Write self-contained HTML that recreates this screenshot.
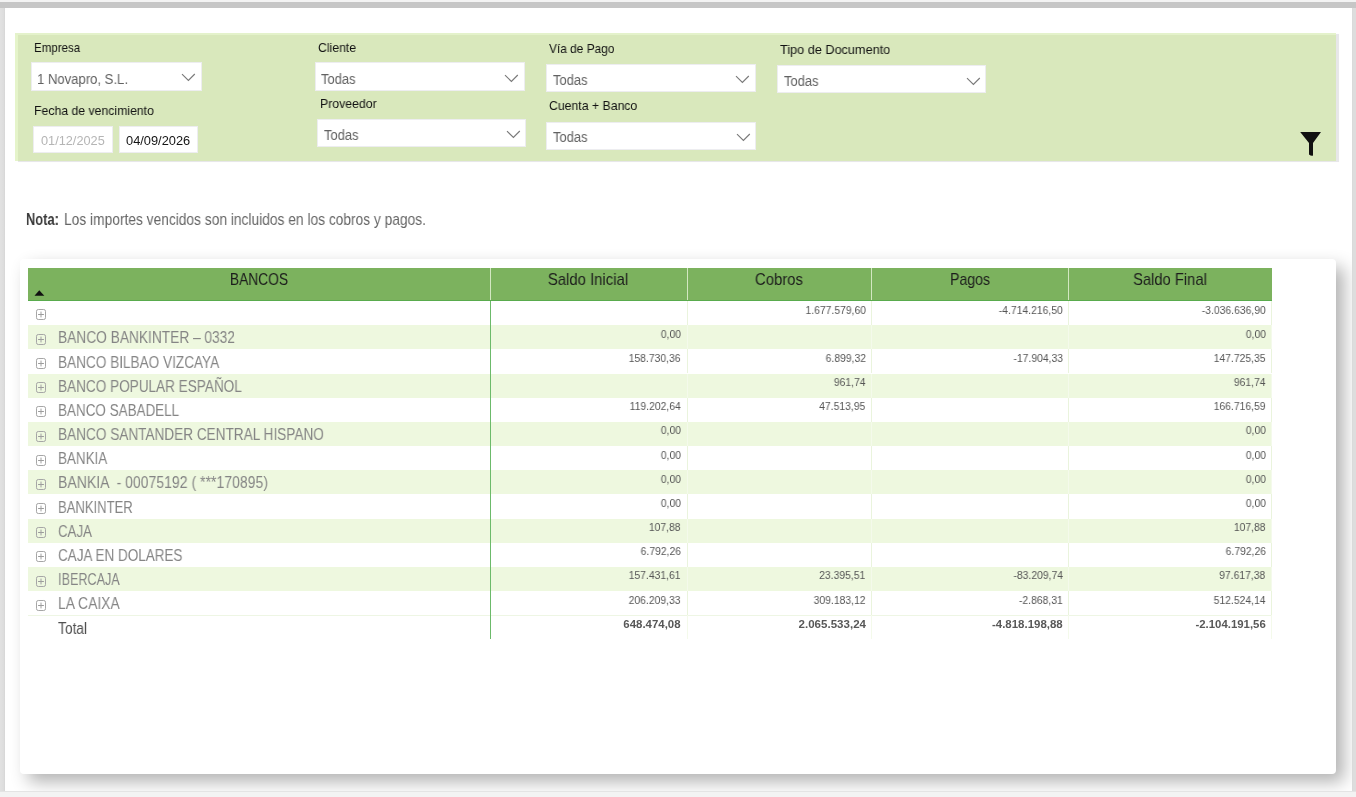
<!DOCTYPE html>
<html><head><meta charset="utf-8"><style>
html,body{margin:0;padding:0;}
body{width:1356px;height:797px;position:relative;overflow:hidden;background:#f3f3f3;font-family:"Liberation Sans",sans-serif;}
.t{position:absolute;white-space:nowrap;line-height:1;will-change:transform;}
.b{position:absolute;}
</style></head><body>
<div class="b" style="left:5px;top:8px;width:1347px;height:783px;background:#ffffff"></div>
<div class="b" style="left:15px;top:33px;width:1321px;height:128px;background:#d9e8bc;box-shadow:3px 1px 0.6px #e7e7e9"></div>
<div class="b" style="left:15px;top:33px;width:3px;height:128px;background:#e5f4ca"></div>
<div class="b" style="left:15px;top:33px;width:1321px;height:1.5px;background:#e4f2cb"></div>
<div class="t" style="left:33.90px;transform-origin:0 0;top:40.50px;font-size:13px;color:#121212;font-weight:normal;transform:scaleX(0.8880);">Empresa</div>
<div class="t" style="left:317.70px;transform-origin:0 0;top:40.50px;font-size:13px;color:#121212;font-weight:normal;transform:scaleX(0.9415);">Cliente</div>
<div class="t" style="left:549.00px;transform-origin:0 0;top:41.50px;font-size:13px;color:#121212;font-weight:normal;transform:scaleX(0.9154);">Vía de Pago</div>
<div class="t" style="left:780.40px;transform-origin:0 0;top:42.50px;font-size:13px;color:#121212;font-weight:normal;transform:scaleX(0.9755);">Tipo de Documento</div>
<div class="t" style="left:34.30px;transform-origin:0 0;top:103.50px;font-size:13px;color:#121212;font-weight:normal;transform:scaleX(0.9428);">Fecha de vencimiento</div>
<div class="t" style="left:320.40px;transform-origin:0 0;top:96.50px;font-size:13px;color:#121212;font-weight:normal;transform:scaleX(0.9436);">Proveedor</div>
<div class="t" style="left:549.10px;transform-origin:0 0;top:98.50px;font-size:13px;color:#121212;font-weight:normal;transform:scaleX(0.9434);">Cuenta + Banco</div>
<div class="b" style="left:31px;top:62px;width:171px;height:29px;background:#fff;box-shadow:inset 0 0 0 1px #ededf0"></div>
<div class="t" style="left:37.20px;transform-origin:0 0;top:71.65px;font-size:14px;color:#626262;font-weight:normal;transform:scaleX(0.9355);">1 Novapro, S.L.</div>
<svg class="b" style="left:180.30px;top:72.10px" width="18" height="12" viewBox="0 0 18 12"><path d="M2.00 2.20 L8.40 8.40 L14.80 2.00" fill="none" stroke="#7a7a7a" stroke-width="1.15"/></svg>
<div class="b" style="left:314.5px;top:62.4px;width:210.5px;height:28.35px;background:#fff;box-shadow:inset 0 0 0 1px #ededf0"></div>
<div class="t" style="left:321.20px;transform-origin:0 0;top:71.65px;font-size:14px;color:#626262;font-weight:normal;transform:scaleX(0.9263);">Todas</div>
<svg class="b" style="left:503.30px;top:72.50px" width="18" height="12" viewBox="0 0 18 12"><path d="M2.00 2.20 L8.40 8.40 L14.80 2.00" fill="none" stroke="#7a7a7a" stroke-width="1.15"/></svg>
<div class="b" style="left:546.3px;top:63.7px;width:209.4px;height:28.8px;background:#fff;box-shadow:inset 0 0 0 1px #ededf0"></div>
<div class="t" style="left:552.50px;transform-origin:0 0;top:72.65px;font-size:14px;color:#626262;font-weight:normal;transform:scaleX(0.9263);">Todas</div>
<svg class="b" style="left:734.00px;top:73.80px" width="18" height="12" viewBox="0 0 18 12"><path d="M2.00 2.20 L8.40 8.40 L14.80 2.00" fill="none" stroke="#7a7a7a" stroke-width="1.15"/></svg>
<div class="b" style="left:777.2px;top:65.4px;width:209.3px;height:28.0px;background:#fff;box-shadow:inset 0 0 0 1px #ededf0"></div>
<div class="t" style="left:783.50px;transform-origin:0 0;top:73.65px;font-size:14px;color:#626262;font-weight:normal;transform:scaleX(0.9263);">Todas</div>
<svg class="b" style="left:964.80px;top:75.50px" width="18" height="12" viewBox="0 0 18 12"><path d="M2.00 2.20 L8.40 8.40 L14.80 2.00" fill="none" stroke="#7a7a7a" stroke-width="1.15"/></svg>
<div class="b" style="left:317.2px;top:118.7px;width:209.3px;height:28.8px;background:#fff;box-shadow:inset 0 0 0 1px #ededf0"></div>
<div class="t" style="left:323.50px;transform-origin:0 0;top:127.65px;font-size:14px;color:#626262;font-weight:normal;transform:scaleX(0.9263);">Todas</div>
<svg class="b" style="left:504.80px;top:128.80px" width="18" height="12" viewBox="0 0 18 12"><path d="M2.00 2.20 L8.40 8.40 L14.80 2.00" fill="none" stroke="#7a7a7a" stroke-width="1.15"/></svg>
<div class="b" style="left:546.3px;top:121.5px;width:210.2px;height:28.3px;background:#fff;box-shadow:inset 0 0 0 1px #ededf0"></div>
<div class="t" style="left:552.50px;transform-origin:0 0;top:129.65px;font-size:14px;color:#626262;font-weight:normal;transform:scaleX(0.9263);">Todas</div>
<svg class="b" style="left:734.80px;top:131.60px" width="18" height="12" viewBox="0 0 18 12"><path d="M2.00 2.20 L8.40 8.40 L14.80 2.00" fill="none" stroke="#7a7a7a" stroke-width="1.15"/></svg>
<div class="b" style="left:33.3px;top:126.3px;width:79.3px;height:26.5px;background:#fff;box-shadow:inset 0 0 0 1px #ededf0"></div>
<div class="b" style="left:119.1px;top:126.3px;width:78.6px;height:26.5px;background:#fff;box-shadow:inset 0 0 0 1px #ededf0"></div>
<div class="t" style="left:41.00px;transform-origin:0 0;top:134.75px;font-size:12.7px;color:#b5b5b5;font-weight:normal;transform:scaleX(1.0037);">01/12/2025</div>
<div class="t" style="left:126.20px;transform-origin:0 0;top:134.75px;font-size:12.7px;color:#151515;font-weight:normal;transform:scaleX(1.0116);">04/09/2026</div>
<svg class="b" style="left:1299px;top:131px" width="24" height="27" viewBox="0 0 24 27"><path d="M1.2 1 L22 1 L14 12 L14 24.5 Q12.5 25.5 10 23.5 L10 12 Z" fill="#111"/></svg>
<div class="t" style="left:25.90px;transform-origin:0 0;top:212.17px;font-size:15.75px;color:#3a3a3a;font-weight:bold;transform:scaleX(0.8176);">Nota:</div>
<div class="t" style="left:63.70px;transform-origin:0 0;top:212.17px;font-size:15.75px;color:#666;font-weight:normal;transform:scaleX(0.8742);">Los importes vencidos son incluidos en los cobros y pagos.</div>
<div class="b" style="left:20px;top:259px;width:1316px;height:515px;background:#fff;border-radius:4px;box-shadow:8px 8px 17px rgba(0,0,0,0.3)"></div>
<div class="b" style="left:28px;top:267.5px;width:1244px;height:33.5px;background:#7cb25e"></div>
<div class="b" style="left:28px;top:300px;width:1244px;height:1px;background:#59ab4d"></div>
<div class="b" style="left:490px;top:267.5px;width:1px;height:32.5px;background:#d3e7c1"></div>
<div class="b" style="left:687px;top:267.5px;width:1px;height:32.5px;background:#d3e7c1"></div>
<div class="b" style="left:871px;top:267.5px;width:1px;height:32.5px;background:#d3e7c1"></div>
<div class="b" style="left:1068px;top:267.5px;width:1px;height:32.5px;background:#d3e7c1"></div>
<div class="t" style="left:-741.00px;width:2000px;text-align:center;transform-origin:50% 0;top:272.17px;font-size:15.75px;color:#1c1c1c;font-weight:normal;transform:scaleX(0.8750);">BANCOS</div>
<div class="t" style="left:-412.40px;width:2000px;text-align:center;transform-origin:50% 0;top:272.17px;font-size:15.75px;color:#1c1c1c;font-weight:normal;transform:scaleX(0.9444);">Saldo Inicial</div>
<div class="t" style="left:-220.60px;width:2000px;text-align:center;transform-origin:50% 0;top:272.17px;font-size:15.75px;color:#1c1c1c;font-weight:normal;transform:scaleX(0.9414);">Cobros</div>
<div class="t" style="left:-30.50px;width:2000px;text-align:center;transform-origin:50% 0;top:272.17px;font-size:15.75px;color:#1c1c1c;font-weight:normal;transform:scaleX(0.8936);">Pagos</div>
<div class="t" style="left:170.00px;width:2000px;text-align:center;transform-origin:50% 0;top:272.17px;font-size:15.75px;color:#1c1c1c;font-weight:normal;transform:scaleX(0.9340);">Saldo Final</div>
<svg class="b" style="left:33.5px;top:290px" width="11" height="6" viewBox="0 0 11 6"><path d="M0.5 5.8 L5.25 0.3 L10.3 5.8 Z" fill="#111"/></svg>
<div class="b" style="left:28px;top:301.0px;width:1244px;height:24.17px;background:#ffffff"></div>
<svg class="b" style="left:34px;top:307px" width="14" height="15" viewBox="0 0 14 15"><rect x="2.5" y="2.5" width="9" height="10" rx="1.8" fill="none" stroke="#a6a6a6" stroke-width="1"/><path d="M4.1 7.5 H9.9" stroke="#9a9a9a" stroke-width="1"/><path d="M7 4.6 V10.4" stroke="#a0a0a0" stroke-width="1"/></svg>
<div class="t" style="right:490.30px;transform-origin:100% 0;top:304.53px;font-size:11.3px;color:#555;font-weight:normal;transform:scaleX(0.9170);">1.677.579,60</div>
<div class="t" style="right:293.40px;transform-origin:100% 0;top:304.53px;font-size:11.3px;color:#555;font-weight:normal;transform:scaleX(0.9170);">-4.714.216,50</div>
<div class="t" style="right:90.40px;transform-origin:100% 0;top:304.53px;font-size:11.3px;color:#555;font-weight:normal;transform:scaleX(0.9170);">-3.036.636,90</div>
<div class="b" style="left:28px;top:325.17px;width:1244px;height:24.17px;background:#eef8df"></div>
<svg class="b" style="left:34px;top:332px" width="14" height="15" viewBox="0 0 14 15"><rect x="2.5" y="2.5" width="9" height="10" rx="1.8" fill="none" stroke="#a6a6a6" stroke-width="1"/><path d="M4.1 7.5 H9.9" stroke="#9a9a9a" stroke-width="1"/><path d="M7 4.6 V10.4" stroke="#a0a0a0" stroke-width="1"/></svg>
<div class="t" style="left:57.60px;transform-origin:0 0;top:330.34px;font-size:15.75px;color:#858585;font-weight:normal;transform:scaleX(0.8716);">BANCO BANKINTER – 0332</div>
<div class="t" style="right:675.40px;transform-origin:100% 0;top:328.70px;font-size:11.3px;color:#555;font-weight:normal;transform:scaleX(0.9170);">0,00</div>
<div class="t" style="right:90.40px;transform-origin:100% 0;top:328.70px;font-size:11.3px;color:#555;font-weight:normal;transform:scaleX(0.9170);">0,00</div>
<div class="b" style="left:28px;top:349.34px;width:1244px;height:24.17px;background:#ffffff"></div>
<svg class="b" style="left:34px;top:356px" width="14" height="15" viewBox="0 0 14 15"><rect x="2.5" y="2.5" width="9" height="10" rx="1.8" fill="none" stroke="#a6a6a6" stroke-width="1"/><path d="M4.1 7.5 H9.9" stroke="#9a9a9a" stroke-width="1"/><path d="M7 4.6 V10.4" stroke="#a0a0a0" stroke-width="1"/></svg>
<div class="t" style="left:57.60px;transform-origin:0 0;top:354.51px;font-size:15.75px;color:#858585;font-weight:normal;transform:scaleX(0.8633);">BANCO BILBAO VIZCAYA</div>
<div class="t" style="right:675.40px;transform-origin:100% 0;top:352.87px;font-size:11.3px;color:#555;font-weight:normal;transform:scaleX(0.9170);">158.730,36</div>
<div class="t" style="right:490.30px;transform-origin:100% 0;top:352.87px;font-size:11.3px;color:#555;font-weight:normal;transform:scaleX(0.9170);">6.899,32</div>
<div class="t" style="right:293.40px;transform-origin:100% 0;top:352.87px;font-size:11.3px;color:#555;font-weight:normal;transform:scaleX(0.9170);">-17.904,33</div>
<div class="t" style="right:90.40px;transform-origin:100% 0;top:352.87px;font-size:11.3px;color:#555;font-weight:normal;transform:scaleX(0.9170);">147.725,35</div>
<div class="b" style="left:28px;top:373.51px;width:1244px;height:24.17px;background:#eef8df"></div>
<svg class="b" style="left:34px;top:380px" width="14" height="15" viewBox="0 0 14 15"><rect x="2.5" y="2.5" width="9" height="10" rx="1.8" fill="none" stroke="#a6a6a6" stroke-width="1"/><path d="M4.1 7.5 H9.9" stroke="#9a9a9a" stroke-width="1"/><path d="M7 4.6 V10.4" stroke="#a0a0a0" stroke-width="1"/></svg>
<div class="t" style="left:57.60px;transform-origin:0 0;top:378.68px;font-size:15.75px;color:#858585;font-weight:normal;transform:scaleX(0.8618);">BANCO POPULAR ESPAÑOL</div>
<div class="t" style="right:490.30px;transform-origin:100% 0;top:377.04px;font-size:11.3px;color:#555;font-weight:normal;transform:scaleX(0.9170);">961,74</div>
<div class="t" style="right:90.40px;transform-origin:100% 0;top:377.04px;font-size:11.3px;color:#555;font-weight:normal;transform:scaleX(0.9170);">961,74</div>
<div class="b" style="left:28px;top:397.68px;width:1244px;height:24.17px;background:#ffffff"></div>
<svg class="b" style="left:34px;top:404px" width="14" height="15" viewBox="0 0 14 15"><rect x="2.5" y="2.5" width="9" height="10" rx="1.8" fill="none" stroke="#a6a6a6" stroke-width="1"/><path d="M4.1 7.5 H9.9" stroke="#9a9a9a" stroke-width="1"/><path d="M7 4.6 V10.4" stroke="#a0a0a0" stroke-width="1"/></svg>
<div class="t" style="left:57.60px;transform-origin:0 0;top:402.85px;font-size:15.75px;color:#858585;font-weight:normal;transform:scaleX(0.8540);">BANCO SABADELL</div>
<div class="t" style="right:675.40px;transform-origin:100% 0;top:401.21px;font-size:11.3px;color:#555;font-weight:normal;transform:scaleX(0.9170);">119.202,64</div>
<div class="t" style="right:490.30px;transform-origin:100% 0;top:401.21px;font-size:11.3px;color:#555;font-weight:normal;transform:scaleX(0.9170);">47.513,95</div>
<div class="t" style="right:90.40px;transform-origin:100% 0;top:401.21px;font-size:11.3px;color:#555;font-weight:normal;transform:scaleX(0.9170);">166.716,59</div>
<div class="b" style="left:28px;top:421.85px;width:1244px;height:24.17px;background:#eef8df"></div>
<svg class="b" style="left:34px;top:429px" width="14" height="15" viewBox="0 0 14 15"><rect x="2.5" y="2.5" width="9" height="10" rx="1.8" fill="none" stroke="#a6a6a6" stroke-width="1"/><path d="M4.1 7.5 H9.9" stroke="#9a9a9a" stroke-width="1"/><path d="M7 4.6 V10.4" stroke="#a0a0a0" stroke-width="1"/></svg>
<div class="t" style="left:57.60px;transform-origin:0 0;top:427.02px;font-size:15.75px;color:#858585;font-weight:normal;transform:scaleX(0.8637);">BANCO SANTANDER CENTRAL HISPANO</div>
<div class="t" style="right:675.40px;transform-origin:100% 0;top:425.38px;font-size:11.3px;color:#555;font-weight:normal;transform:scaleX(0.9170);">0,00</div>
<div class="t" style="right:90.40px;transform-origin:100% 0;top:425.38px;font-size:11.3px;color:#555;font-weight:normal;transform:scaleX(0.9170);">0,00</div>
<div class="b" style="left:28px;top:446.02px;width:1244px;height:24.17px;background:#ffffff"></div>
<svg class="b" style="left:34px;top:453px" width="14" height="15" viewBox="0 0 14 15"><rect x="2.5" y="2.5" width="9" height="10" rx="1.8" fill="none" stroke="#a6a6a6" stroke-width="1"/><path d="M4.1 7.5 H9.9" stroke="#9a9a9a" stroke-width="1"/><path d="M7 4.6 V10.4" stroke="#a0a0a0" stroke-width="1"/></svg>
<div class="t" style="left:57.60px;transform-origin:0 0;top:451.19px;font-size:15.75px;color:#858585;font-weight:normal;transform:scaleX(0.8516);">BANKIA</div>
<div class="t" style="right:675.40px;transform-origin:100% 0;top:449.55px;font-size:11.3px;color:#555;font-weight:normal;transform:scaleX(0.9170);">0,00</div>
<div class="t" style="right:90.40px;transform-origin:100% 0;top:449.55px;font-size:11.3px;color:#555;font-weight:normal;transform:scaleX(0.9170);">0,00</div>
<div class="b" style="left:28px;top:470.19px;width:1244px;height:24.17px;background:#eef8df"></div>
<svg class="b" style="left:34px;top:477px" width="14" height="15" viewBox="0 0 14 15"><rect x="2.5" y="2.5" width="9" height="10" rx="1.8" fill="none" stroke="#a6a6a6" stroke-width="1"/><path d="M4.1 7.5 H9.9" stroke="#9a9a9a" stroke-width="1"/><path d="M7 4.6 V10.4" stroke="#a0a0a0" stroke-width="1"/></svg>
<div class="t" style="left:57.60px;transform-origin:0 0;top:475.36px;font-size:15.75px;color:#858585;font-weight:normal;transform:scaleX(0.8916);">BANKIA &nbsp;- 00075192 ( ***170895)</div>
<div class="t" style="right:675.40px;transform-origin:100% 0;top:473.72px;font-size:11.3px;color:#555;font-weight:normal;transform:scaleX(0.9170);">0,00</div>
<div class="t" style="right:90.40px;transform-origin:100% 0;top:473.72px;font-size:11.3px;color:#555;font-weight:normal;transform:scaleX(0.9170);">0,00</div>
<div class="b" style="left:28px;top:494.36px;width:1244px;height:24.17px;background:#ffffff"></div>
<svg class="b" style="left:34px;top:501px" width="14" height="15" viewBox="0 0 14 15"><rect x="2.5" y="2.5" width="9" height="10" rx="1.8" fill="none" stroke="#a6a6a6" stroke-width="1"/><path d="M4.1 7.5 H9.9" stroke="#9a9a9a" stroke-width="1"/><path d="M7 4.6 V10.4" stroke="#a0a0a0" stroke-width="1"/></svg>
<div class="t" style="left:57.60px;transform-origin:0 0;top:499.53px;font-size:15.75px;color:#858585;font-weight:normal;transform:scaleX(0.8287);">BANKINTER</div>
<div class="t" style="right:675.40px;transform-origin:100% 0;top:497.89px;font-size:11.3px;color:#555;font-weight:normal;transform:scaleX(0.9170);">0,00</div>
<div class="t" style="right:90.40px;transform-origin:100% 0;top:497.89px;font-size:11.3px;color:#555;font-weight:normal;transform:scaleX(0.9170);">0,00</div>
<div class="b" style="left:28px;top:518.53px;width:1244px;height:24.17px;background:#eef8df"></div>
<svg class="b" style="left:34px;top:525px" width="14" height="15" viewBox="0 0 14 15"><rect x="2.5" y="2.5" width="9" height="10" rx="1.8" fill="none" stroke="#a6a6a6" stroke-width="1"/><path d="M4.1 7.5 H9.9" stroke="#9a9a9a" stroke-width="1"/><path d="M7 4.6 V10.4" stroke="#a0a0a0" stroke-width="1"/></svg>
<div class="t" style="left:57.60px;transform-origin:0 0;top:523.70px;font-size:15.75px;color:#858585;font-weight:normal;transform:scaleX(0.8421);">CAJA</div>
<div class="t" style="right:675.40px;transform-origin:100% 0;top:522.06px;font-size:11.3px;color:#555;font-weight:normal;transform:scaleX(0.9170);">107,88</div>
<div class="t" style="right:90.40px;transform-origin:100% 0;top:522.06px;font-size:11.3px;color:#555;font-weight:normal;transform:scaleX(0.9170);">107,88</div>
<div class="b" style="left:28px;top:542.7px;width:1244px;height:24.17px;background:#ffffff"></div>
<svg class="b" style="left:34px;top:549px" width="14" height="15" viewBox="0 0 14 15"><rect x="2.5" y="2.5" width="9" height="10" rx="1.8" fill="none" stroke="#a6a6a6" stroke-width="1"/><path d="M4.1 7.5 H9.9" stroke="#9a9a9a" stroke-width="1"/><path d="M7 4.6 V10.4" stroke="#a0a0a0" stroke-width="1"/></svg>
<div class="t" style="left:57.60px;transform-origin:0 0;top:547.87px;font-size:15.75px;color:#858585;font-weight:normal;transform:scaleX(0.8562);">CAJA EN DOLARES</div>
<div class="t" style="right:675.40px;transform-origin:100% 0;top:546.23px;font-size:11.3px;color:#555;font-weight:normal;transform:scaleX(0.9170);">6.792,26</div>
<div class="t" style="right:90.40px;transform-origin:100% 0;top:546.23px;font-size:11.3px;color:#555;font-weight:normal;transform:scaleX(0.9170);">6.792,26</div>
<div class="b" style="left:28px;top:566.87px;width:1244px;height:24.17px;background:#eef8df"></div>
<svg class="b" style="left:34px;top:574px" width="14" height="15" viewBox="0 0 14 15"><rect x="2.5" y="2.5" width="9" height="10" rx="1.8" fill="none" stroke="#a6a6a6" stroke-width="1"/><path d="M4.1 7.5 H9.9" stroke="#9a9a9a" stroke-width="1"/><path d="M7 4.6 V10.4" stroke="#a0a0a0" stroke-width="1"/></svg>
<div class="t" style="left:57.60px;transform-origin:0 0;top:572.04px;font-size:15.75px;color:#858585;font-weight:normal;transform:scaleX(0.8011);">IBERCAJA</div>
<div class="t" style="right:675.40px;transform-origin:100% 0;top:570.40px;font-size:11.3px;color:#555;font-weight:normal;transform:scaleX(0.9170);">157.431,61</div>
<div class="t" style="right:490.30px;transform-origin:100% 0;top:570.40px;font-size:11.3px;color:#555;font-weight:normal;transform:scaleX(0.9170);">23.395,51</div>
<div class="t" style="right:293.40px;transform-origin:100% 0;top:570.40px;font-size:11.3px;color:#555;font-weight:normal;transform:scaleX(0.9170);">-83.209,74</div>
<div class="t" style="right:90.40px;transform-origin:100% 0;top:570.40px;font-size:11.3px;color:#555;font-weight:normal;transform:scaleX(0.9170);">97.617,38</div>
<div class="b" style="left:28px;top:591.04px;width:1244px;height:24.17px;background:#ffffff"></div>
<svg class="b" style="left:34px;top:598px" width="14" height="15" viewBox="0 0 14 15"><rect x="2.5" y="2.5" width="9" height="10" rx="1.8" fill="none" stroke="#a6a6a6" stroke-width="1"/><path d="M4.1 7.5 H9.9" stroke="#9a9a9a" stroke-width="1"/><path d="M7 4.6 V10.4" stroke="#a0a0a0" stroke-width="1"/></svg>
<div class="t" style="left:57.60px;transform-origin:0 0;top:596.21px;font-size:15.75px;color:#858585;font-weight:normal;transform:scaleX(0.8809);">LA CAIXA</div>
<div class="t" style="right:675.40px;transform-origin:100% 0;top:594.57px;font-size:11.3px;color:#555;font-weight:normal;transform:scaleX(0.9170);">206.209,33</div>
<div class="t" style="right:490.30px;transform-origin:100% 0;top:594.57px;font-size:11.3px;color:#555;font-weight:normal;transform:scaleX(0.9170);">309.183,12</div>
<div class="t" style="right:293.40px;transform-origin:100% 0;top:594.57px;font-size:11.3px;color:#555;font-weight:normal;transform:scaleX(0.9170);">-2.868,31</div>
<div class="t" style="right:90.40px;transform-origin:100% 0;top:594.57px;font-size:11.3px;color:#555;font-weight:normal;transform:scaleX(0.9170);">512.524,14</div>
<div class="b" style="left:28px;top:615px;width:1244px;height:1px;background:#eef6e4"></div>
<div class="t" style="left:58.10px;transform-origin:0 0;top:621.13px;font-size:15.8px;color:#505050;font-weight:normal;transform:scaleX(0.8721);">Total</div>
<div class="t" style="right:675.10px;transform-origin:100% 0;top:618.93px;font-size:11.3px;color:#585858;font-weight:bold;transform:scaleX(1.0114);">648.474,08</div>
<div class="t" style="right:490.00px;transform-origin:100% 0;top:618.93px;font-size:11.3px;color:#585858;font-weight:bold;transform:scaleX(1.0215);">2.065.533,24</div>
<div class="t" style="right:293.70px;transform-origin:100% 0;top:618.93px;font-size:11.3px;color:#585858;font-weight:bold;transform:scaleX(1.0151);">-4.818.198,88</div>
<div class="t" style="right:90.00px;transform-origin:100% 0;top:618.93px;font-size:11.3px;color:#585858;font-weight:bold;transform:scaleX(1.0080);">-2.104.191,56</div>
<div class="b" style="left:490px;top:301px;width:1px;height:338.38px;background:#6cba6a"></div>
<div class="b" style="left:687px;top:301.0px;width:1px;height:24.17px;background:#eaf4dd"></div>
<div class="b" style="left:871px;top:301.0px;width:1px;height:24.17px;background:#eaf4dd"></div>
<div class="b" style="left:1068px;top:301.0px;width:1px;height:24.17px;background:#eaf4dd"></div>
<div class="b" style="left:1271px;top:301.0px;width:1px;height:24.17px;background:#eaf4dd"></div>
<div class="b" style="left:687px;top:325.17px;width:1px;height:24.17px;background:#f4faeb"></div>
<div class="b" style="left:871px;top:325.17px;width:1px;height:24.17px;background:#f4faeb"></div>
<div class="b" style="left:1068px;top:325.17px;width:1px;height:24.17px;background:#f4faeb"></div>
<div class="b" style="left:1271px;top:325.17px;width:1px;height:24.17px;background:#f4faeb"></div>
<div class="b" style="left:687px;top:349.34px;width:1px;height:24.17px;background:#eaf4dd"></div>
<div class="b" style="left:871px;top:349.34px;width:1px;height:24.17px;background:#eaf4dd"></div>
<div class="b" style="left:1068px;top:349.34px;width:1px;height:24.17px;background:#eaf4dd"></div>
<div class="b" style="left:1271px;top:349.34px;width:1px;height:24.17px;background:#eaf4dd"></div>
<div class="b" style="left:687px;top:373.51px;width:1px;height:24.17px;background:#f4faeb"></div>
<div class="b" style="left:871px;top:373.51px;width:1px;height:24.17px;background:#f4faeb"></div>
<div class="b" style="left:1068px;top:373.51px;width:1px;height:24.17px;background:#f4faeb"></div>
<div class="b" style="left:1271px;top:373.51px;width:1px;height:24.17px;background:#f4faeb"></div>
<div class="b" style="left:687px;top:397.68px;width:1px;height:24.17px;background:#eaf4dd"></div>
<div class="b" style="left:871px;top:397.68px;width:1px;height:24.17px;background:#eaf4dd"></div>
<div class="b" style="left:1068px;top:397.68px;width:1px;height:24.17px;background:#eaf4dd"></div>
<div class="b" style="left:1271px;top:397.68px;width:1px;height:24.17px;background:#eaf4dd"></div>
<div class="b" style="left:687px;top:421.85px;width:1px;height:24.17px;background:#f4faeb"></div>
<div class="b" style="left:871px;top:421.85px;width:1px;height:24.17px;background:#f4faeb"></div>
<div class="b" style="left:1068px;top:421.85px;width:1px;height:24.17px;background:#f4faeb"></div>
<div class="b" style="left:1271px;top:421.85px;width:1px;height:24.17px;background:#f4faeb"></div>
<div class="b" style="left:687px;top:446.02px;width:1px;height:24.17px;background:#eaf4dd"></div>
<div class="b" style="left:871px;top:446.02px;width:1px;height:24.17px;background:#eaf4dd"></div>
<div class="b" style="left:1068px;top:446.02px;width:1px;height:24.17px;background:#eaf4dd"></div>
<div class="b" style="left:1271px;top:446.02px;width:1px;height:24.17px;background:#eaf4dd"></div>
<div class="b" style="left:687px;top:470.19px;width:1px;height:24.17px;background:#f4faeb"></div>
<div class="b" style="left:871px;top:470.19px;width:1px;height:24.17px;background:#f4faeb"></div>
<div class="b" style="left:1068px;top:470.19px;width:1px;height:24.17px;background:#f4faeb"></div>
<div class="b" style="left:1271px;top:470.19px;width:1px;height:24.17px;background:#f4faeb"></div>
<div class="b" style="left:687px;top:494.36px;width:1px;height:24.17px;background:#eaf4dd"></div>
<div class="b" style="left:871px;top:494.36px;width:1px;height:24.17px;background:#eaf4dd"></div>
<div class="b" style="left:1068px;top:494.36px;width:1px;height:24.17px;background:#eaf4dd"></div>
<div class="b" style="left:1271px;top:494.36px;width:1px;height:24.17px;background:#eaf4dd"></div>
<div class="b" style="left:687px;top:518.53px;width:1px;height:24.17px;background:#f4faeb"></div>
<div class="b" style="left:871px;top:518.53px;width:1px;height:24.17px;background:#f4faeb"></div>
<div class="b" style="left:1068px;top:518.53px;width:1px;height:24.17px;background:#f4faeb"></div>
<div class="b" style="left:1271px;top:518.53px;width:1px;height:24.17px;background:#f4faeb"></div>
<div class="b" style="left:687px;top:542.7px;width:1px;height:24.17px;background:#eaf4dd"></div>
<div class="b" style="left:871px;top:542.7px;width:1px;height:24.17px;background:#eaf4dd"></div>
<div class="b" style="left:1068px;top:542.7px;width:1px;height:24.17px;background:#eaf4dd"></div>
<div class="b" style="left:1271px;top:542.7px;width:1px;height:24.17px;background:#eaf4dd"></div>
<div class="b" style="left:687px;top:566.87px;width:1px;height:24.17px;background:#f4faeb"></div>
<div class="b" style="left:871px;top:566.87px;width:1px;height:24.17px;background:#f4faeb"></div>
<div class="b" style="left:1068px;top:566.87px;width:1px;height:24.17px;background:#f4faeb"></div>
<div class="b" style="left:1271px;top:566.87px;width:1px;height:24.17px;background:#f4faeb"></div>
<div class="b" style="left:687px;top:591.04px;width:1px;height:24.17px;background:#eaf4dd"></div>
<div class="b" style="left:871px;top:591.04px;width:1px;height:24.17px;background:#eaf4dd"></div>
<div class="b" style="left:1068px;top:591.04px;width:1px;height:24.17px;background:#eaf4dd"></div>
<div class="b" style="left:1271px;top:591.04px;width:1px;height:24.17px;background:#eaf4dd"></div>
<div class="b" style="left:687px;top:615.21px;width:1px;height:24.17px;background:#f4faeb"></div>
<div class="b" style="left:871px;top:615.21px;width:1px;height:24.17px;background:#f4faeb"></div>
<div class="b" style="left:1068px;top:615.21px;width:1px;height:24.17px;background:#f4faeb"></div>
<div class="b" style="left:1271px;top:615.21px;width:1px;height:24.17px;background:#f4faeb"></div>
<div class="b" style="left:0px;top:0px;width:1356px;height:2px;background:#f3f3f3"></div>
<div class="b" style="left:0px;top:2px;width:1356px;height:6px;background:#c6c6c6"></div>
<div class="b" style="left:0px;top:8px;width:5px;height:783px;background:linear-gradient(90deg,#e2e2e2,#dddddd 70%,#d6d6d6)"></div>
<div class="b" style="left:1352px;top:8px;width:4px;height:783px;background:linear-gradient(90deg,#d8d8d8,#dddddd 30%)"></div>
<div class="b" style="left:0px;top:791px;width:1356px;height:1px;background:#e4e4e4"></div>
<div class="b" style="left:0px;top:792px;width:1356px;height:5px;background:#f3f3f3"></div>
</body></html>
